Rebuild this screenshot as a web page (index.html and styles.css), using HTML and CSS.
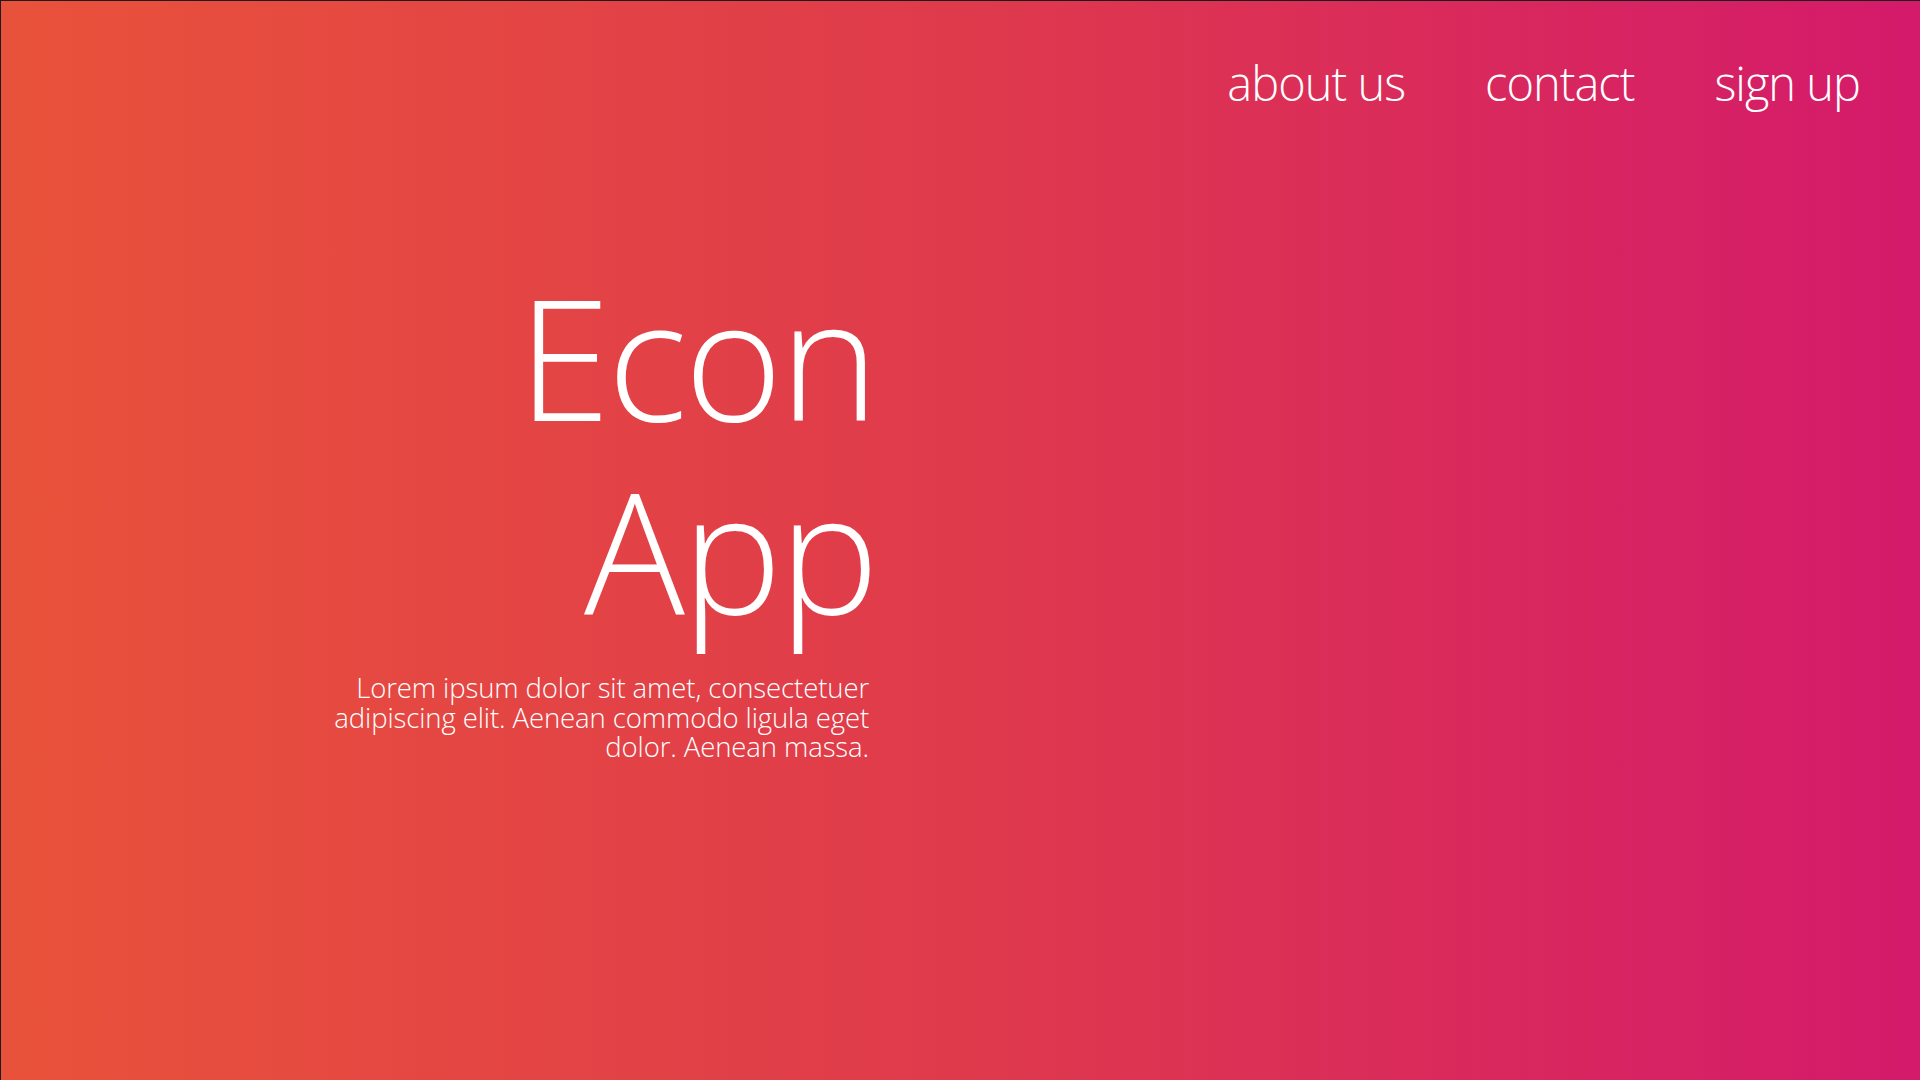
FILE: index.html
```html
<!DOCTYPE html>
<html lang="en">
<head>
<meta charset="utf-8">
<title>Econ App</title>
<link rel="stylesheet" href="styles.css">
</head>
<body>
<div class="page">
  <nav class="nav">
    <a class="nav-link" href="#">about us</a>
    <a class="nav-link" href="#">contact</a>
    <a class="nav-link" href="#">sign up</a>
  </nav>
  <main class="hero">
    <h1 class="title">Econ<br>App</h1>
    <p class="lead">Lorem ipsum dolor sit amet, consectetuer<br>adipiscing elit. Aenean commodo ligula eget<br>dolor. Aenean massa.</p>
  </main>
</div>
</body>
</html>
```
FILE: styles.css
```css
html, body {
  margin: 0;
  padding: 0;
  height: 100%;
}
body {
  font-family: "Open Sans", "Noto Sans", sans-serif;
  font-weight: 300;
  color: #ffffff;
  overflow: hidden;
}
.page {
  box-sizing: border-box;
  height: 1080px;
  border-top: 1px solid #1c1c1c;
  border-left: 1px solid #1c1c1c;
  background: linear-gradient(to right, #e9523a 0%, #df3a4c 50%, #d41a6b 100%);
}
.nav {
  display: flex;
  justify-content: flex-end;
  gap: 80px;
  padding: 52px 60px 0 0;
}
.nav-link {
  color: #ffffff;
  text-decoration: none;
  font-size: 47px;
  line-height: 60px;
  letter-spacing: -1px;
}
.hero {
  width: 868px;
  text-align: right;
  margin-top: 146px;
}
.title {
  margin: 0 -7px 0 0;
  font-weight: 300;
  font-size: 168px;
  line-height: 193px;
  letter-spacing: -3px;
}
.lead {
  margin: 28px 0 0 0;
  font-size: 27.5px;
  line-height: 29.5px;
  letter-spacing: -0.1px;
}
```
